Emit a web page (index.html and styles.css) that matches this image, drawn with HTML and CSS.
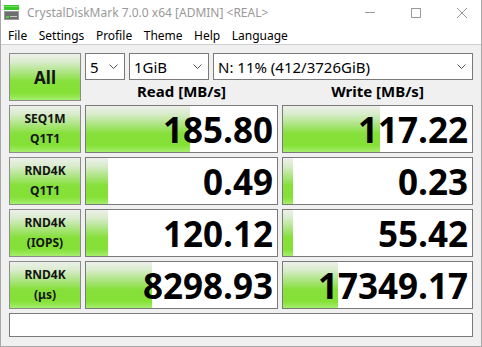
FILE: index.html
```html
<!DOCTYPE html>
<html>
<head>
<meta charset="utf-8">
<link rel="stylesheet" href="styles.css">
</head>
<body>
<div class="window">
  <div class="titlebar">
    <svg class="appicon" width="16" height="16" viewBox="0 0 16 16">
      <rect x="0" y="0" width="15" height="5" fill="#38c828"/>
      <rect x="0" y="1" width="15" height="1" fill="#70e060"/>
      <rect x="0" y="6" width="15" height="9" fill="#9a9a9a"/>
      <rect x="1" y="7" width="13" height="7" fill="#6e6e6e"/>
      <rect x="2" y="11" width="3" height="2" fill="#50d040"/>
      <rect x="6" y="11" width="7" height="1" fill="#c8c8c8"/>
    </svg>
    <span class="title">CrystalDiskMark 7.0.0 x64 [ADMIN] &lt;REAL&gt;</span>
    <div class="controls">
      <svg width="46" height="24" viewBox="0 0 46 24"><line x1="18" y1="12.5" x2="28" y2="12.5" stroke="#9a9a9a" stroke-width="1"/></svg>
      <svg width="46" height="24" viewBox="0 0 46 24"><rect x="18.5" y="8.5" width="9" height="9" fill="none" stroke="#9a9a9a" stroke-width="1"/></svg>
      <svg width="46" height="24" viewBox="0 0 46 24"><path d="M18 8 L28 18 M28 8 L18 18" stroke="#9a9a9a" stroke-width="1"/></svg>
    </div>
  </div>
  <div class="menubar">
    <span>File</span><span>Settings</span><span>Profile</span><span>Theme</span><span>Help</span><span>Language</span>
  </div>
  <div class="client">
    <div class="grid">
      <div class="btn all">All</div>
      <div class="top">
        <div class="selects">
          <div class="sel s1"><span>5</span><svg class="chev" width="9" height="5" viewBox="0 0 9 5"><path d="M0.5 0.5 L4.5 4.5 L8.5 0.5" fill="none" stroke="#505050" stroke-width="1"/></svg></div>
          <div class="sel s2"><span>1GiB</span><svg class="chev" width="9" height="5" viewBox="0 0 9 5"><path d="M0.5 0.5 L4.5 4.5 L8.5 0.5" fill="none" stroke="#505050" stroke-width="1"/></svg></div>
          <div class="sel s3"><span>N: 11% (412/3726GiB)</span><svg class="chev" width="9" height="5" viewBox="0 0 9 5"><path d="M0.5 0.5 L4.5 4.5 L8.5 0.5" fill="none" stroke="#505050" stroke-width="1"/></svg></div>
        </div>
        <div class="heads"><div>Read [MB/s]</div><div>Write [MB/s]</div></div>
      </div>

      <div class="btn lbl">SEQ1M<br>Q1T1</div>
      <div class="cell"><div class="fill" style="width:104px"></div><span class="val">185.80</span></div>
      <div class="cell"><div class="fill" style="width:97px"></div><span class="val">117.22</span></div>

      <div class="btn lbl">RND4K<br>Q1T1</div>
      <div class="cell"><div class="fill" style="width:22px"></div><span class="val">0.49</span></div>
      <div class="cell"><div class="fill" style="width:10px"></div><span class="val">0.23</span></div>

      <div class="btn lbl">RND4K<br>(IOPS)</div>
      <div class="cell"><div class="fill" style="width:22px"></div><span class="val">120.12</span></div>
      <div class="cell"><div class="fill" style="width:10px"></div><span class="val">55.42</span></div>

      <div class="btn lbl">RND4K<br>(μs)</div>
      <div class="cell"><div class="fill" style="width:66px"></div><span class="val">8298.93</span></div>
      <div class="cell"><div class="fill" style="width:55px"></div><span class="val">17349.17</span></div>
    </div>
    <div class="comment"></div>
  </div>
</div>
</body>
</html>
```
FILE: styles.css
```css
html, body {
  margin: 0;
  padding: 0;
  background: #ffffff;
}
.window {
  width: 482px;
  height: 347px;
  box-sizing: border-box;
  border-left: 1px solid #a8a8a8;
  border-right: 1px solid #a8a8a8;
  border-bottom: 1px solid #a8a8a8;
  display: flex;
  flex-direction: column;
  font-family: "Noto Sans", "Open Sans", sans-serif;
  overflow: hidden;
}
.titlebar {
  height: 24px;
  display: flex;
  align-items: center;
  background: #fff;
}
.appicon {
  margin-left: 3px;
  margin-top: 2px;
}
.title {
  margin-left: 7px;
  font-size: 12px;
  color: #999999;
  white-space: nowrap;
  flex: 1;
}
.controls {
  display: flex;
  margin-right: -4px;
}
.menubar {
  height: 21px;
  box-sizing: border-box;
  padding-top: 2px;
  display: flex;
  align-items: center;
  font-size: 12px;
  color: #000;
  border-bottom: 1px solid #cfcfcf;
  background: #fff;
  padding-left: 7px;
}
.menubar span {
  margin-right: 11.5px;
}
.client {
  flex: 1;
  background: #f0f0f0;
  padding: 8px;
  display: flex;
  flex-direction: column;
  gap: 4px;
}
.grid {
  display: grid;
  grid-template-columns: 72px 193px 191px;
  grid-auto-rows: 48px;
  column-gap: 4px;
  row-gap: 4px;
}
.btn {
  box-sizing: border-box;
  border: 1px solid #8c8c8c;
  background: linear-gradient(to bottom, #edf0eb 0%, #d8ecca 18%, #a8e47a 42%, #86e03a 60%, #84e036 85%, #a6ee6e 100%);
  display: flex;
  align-items: center;
  justify-content: center;
  text-align: center;
  font-weight: 700;
  color: #141414;
}
.all {
  font-size: 17px;
}
.lbl {
  font-size: 12px;
  line-height: 20px;
}
.top {
  grid-column: 2 / 4;
  display: flex;
  flex-direction: column;
}
.selects {
  display: flex;
  gap: 4px;
  height: 27px;
}
.sel {
  box-sizing: border-box;
  height: 27px;
  border: 1px solid #7a7a7a;
  background: #fff;
  display: flex;
  align-items: center;
  justify-content: space-between;
  padding: 0 6px 0 4px;
  font-size: 15px;
  color: #000;
}
.s1 { width: 40px; }
.s2 { width: 80px; }
.s3 { flex: 1; }
.chev { flex: none; }
.heads {
  flex: 1;
  display: grid;
  grid-template-columns: 193px 191px;
  column-gap: 4px;
  align-items: center;
}
.heads div {
  text-align: center;
  font-weight: 700;
  font-size: 15px;
  color: #000;
}
.cell {
  box-sizing: border-box;
  position: relative;
  border: 1px solid #7a7a7a;
  background: #fff;
  display: flex;
  align-items: center;
  justify-content: flex-end;
  padding-right: 4px;
  overflow: hidden;
}
.fill {
  position: absolute;
  left: 0;
  top: 0;
  bottom: 0;
  background: linear-gradient(to bottom, #edf0eb 0%, #d8ecca 18%, #a8e47a 42%, #86e03a 60%, #84e036 85%, #a6ee6e 100%);
}
.val {
  position: relative;
  font-family: "Open Sans", "Noto Sans", sans-serif;
  font-weight: 700;
  font-size: 35px;
  line-height: 1;
  color: #000;
}
.comment {
  height: 24px;
  box-sizing: border-box;
  border: 1px solid #7a7a7a;
  background: #fff;
  width: 464px;
}
```
